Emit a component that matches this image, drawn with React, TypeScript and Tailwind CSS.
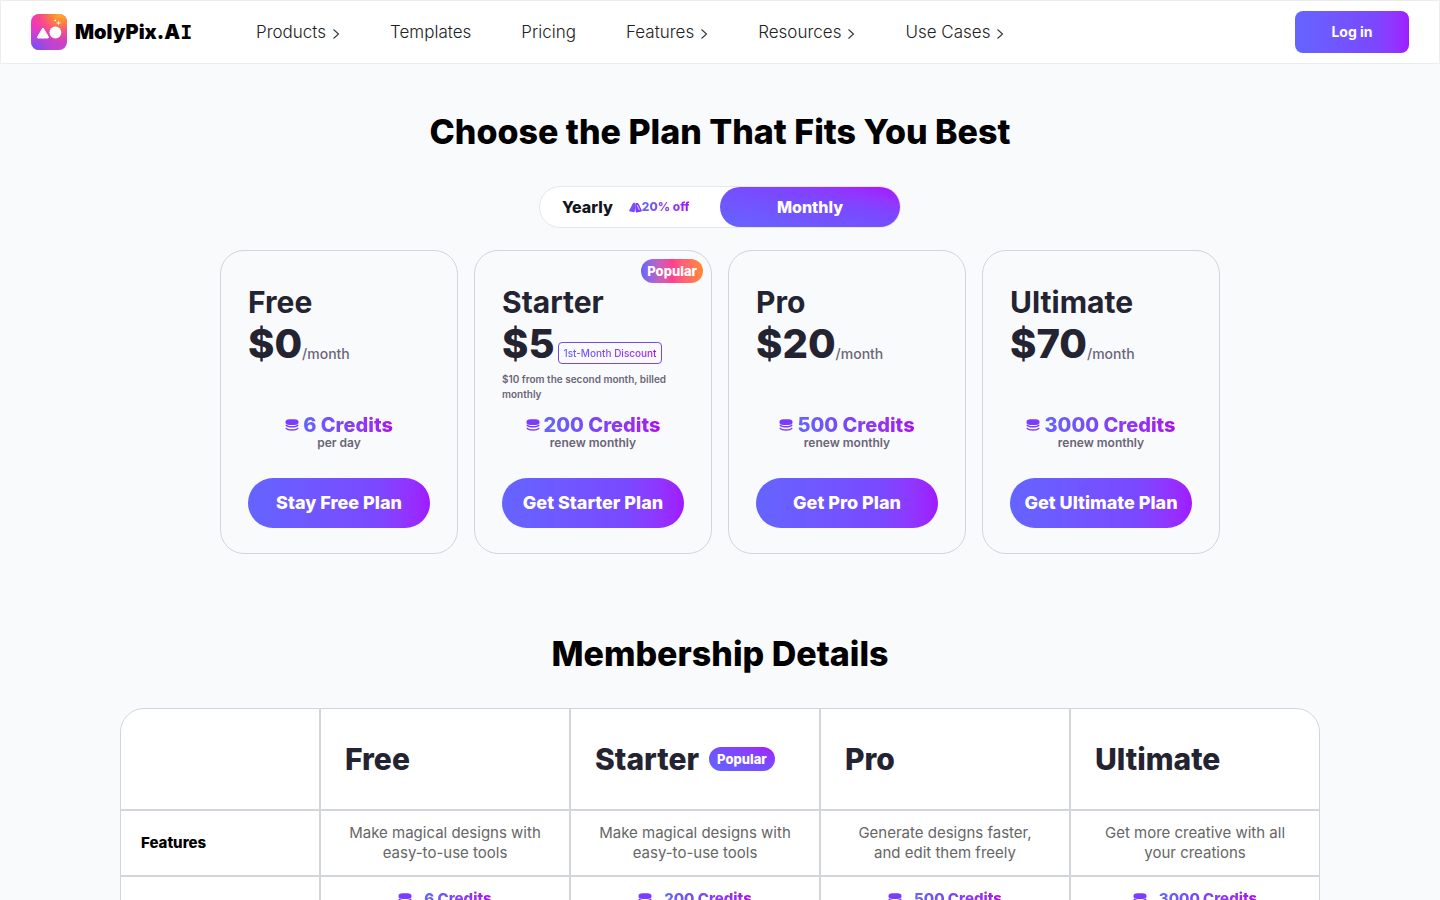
import { useState } from 'react';
import clsx from 'clsx';

type Plan = {
  name: string;
  price: string;
  credits: string;
  renew: string;
  cta: string;
  summary: string;
  discount?: string;
  note?: string;
  popular?: boolean;
};

const plans: Plan[] = [
  {
    name: 'Free',
    price: '$0',
    credits: '6 Credits',
    renew: 'per day',
    cta: 'Stay Free Plan',
    summary: 'Make magical designs with easy-to-use tools',
  },
  {
    name: 'Starter',
    price: '$5',
    credits: '200 Credits',
    renew: 'renew monthly',
    cta: 'Get Starter Plan',
    summary: 'Make magical designs with easy-to-use tools',
    discount: '1st-Month Discount',
    note: '$10 from the second month, billed monthly',
    popular: true,
  },
  {
    name: 'Pro',
    price: '$20',
    credits: '500 Credits',
    renew: 'renew monthly',
    cta: 'Get Pro Plan',
    summary: 'Generate designs faster, and edit them freely',
  },
  {
    name: 'Ultimate',
    price: '$70',
    credits: '3000 Credits',
    renew: 'renew monthly',
    cta: 'Get Ultimate Plan',
    summary: 'Get more creative with all your creations',
  },
];

const navItems = [
  { label: 'Products', menu: true },
  { label: 'Templates', menu: false },
  { label: 'Pricing', menu: false },
  { label: 'Features', menu: true },
  { label: 'Resources', menu: true },
  { label: 'Use Cases', menu: true },
];

const gradientFill = 'bg-linear-to-r from-[#6464ff] via-[#7a48ff] via-70% to-[#a01aff]';
const gradientText =
  'bg-linear-to-r from-[#6464ff] via-[#7a48f5] via-40% to-[#a808f0] bg-clip-text text-transparent';

function LogoMark() {
  return (
    <svg viewBox="0 0 36 36" className="size-9 shrink-0" aria-hidden="true">
      <defs>
        <linearGradient id="logo-base" x1="0" y1="0" x2="0.3" y2="1">
          <stop offset="0" stopColor="#f43ca8" />
          <stop offset="0.45" stopColor="#ee38c8" />
          <stop offset="1" stopColor="#c444cc" />
        </linearGradient>
        <radialGradient id="logo-warm" cx="0.82" cy="0" r="0.85">
          <stop offset="0" stopColor="#ffb41e" />
          <stop offset="0.35" stopColor="#ff7a45" />
          <stop offset="1" stopColor="#f5368f" stopOpacity="0" />
        </radialGradient>
        <radialGradient id="logo-cool" cx="0.1" cy="1" r="0.7">
          <stop offset="0" stopColor="#6a50f8" />
          <stop offset="1" stopColor="#b044e0" stopOpacity="0" />
        </radialGradient>
      </defs>
      <rect width="36" height="36" rx="8" fill="url(#logo-base)" />
      <rect width="36" height="36" rx="8" fill="url(#logo-warm)" />
      <rect width="36" height="36" rx="8" fill="url(#logo-cool)" />
      <path
        d="M12.3 14.2 17.4 23a.7.7 0 0 1-.6 1H7.2a.7.7 0 0 1-.6-1l5.1-8.8a.4.4 0 0 1 .6 0Z"
        fill="#fff"
        stroke="#fff"
        strokeLinejoin="round"
      />
      <circle cx="24.4" cy="18.5" r="5.9" fill="#fff" />
      <path
        d="M27.5 6.2c.3 1.9.8 2.4 2.7 2.7-1.9.3-2.4.8-2.7 2.7-.3-1.9-.8-2.4-2.7-2.7 1.9-.3 2.4-.8 2.7-2.7Z"
        fill="#fff"
      />
      <path
        d="M24.2 5c.15 1 .4 1.2 1.3 1.4-.9.2-1.15.4-1.3 1.4-.15-1-.4-1.2-1.3-1.4.9-.2 1.15-.4 1.3-1.4Z"
        fill="#fff"
      />
    </svg>
  );
}

function CoinsIcon() {
  return (
    <svg viewBox="0 0 14 12" className="h-3 w-3.5 shrink-0" aria-hidden="true">
      <rect x="0.5" y="0.3" width="13" height="5.6" rx="4" ry="2.6" fill="#7c3cff" />
      <g fill="none" stroke="#7c3cff" strokeWidth="1.4" strokeLinecap="round">
        <path d="M1.2 6.3c.8 1 3 1.5 5.800 1.500s5-.5 5.800-1.500" />
        <path d="M1.200 9.300c.8 1.100 3 1.700 5.800 1.700s5-.6 5.800-1.700" />
      </g>
    </svg>
  );
}

function TagsIcon() {
  return (
    <svg viewBox="0 0 13 12" className="h-3 w-[13px] shrink-0" aria-hidden="true">
      <path
        d="M3.400 3.200C4 2.100 5.400 1.600 6.300 2c.5 2.400.3 5.800-.8 9.200L1 10.400c-.5-.1-.9-.4-.8-.9Z"
        fill="#7350ff"
      />
      <path
        d="M6.900 2.100c1-.4 2.400 0 3 1.100l2.900 6.200c.2.400 0 .8-.4 1L7.800 11.400c-.5.1-.9-.1-1-.6C6.300 8 6.200 4.800 6.900 2.100Z"
        fill="#7c3cff"
      />
      <path d="m8.200 4 2.200 5" stroke="#fff" strokeWidth=".8" />
    </svg>
  );
}

function Chevron() {
  return (
    <svg viewBox="0 0 8 12" className="mt-1 h-3 w-2 shrink-0" aria-hidden="true">
      <path d="m1.500 1.500 5 4.500-5 4.500" fill="none" stroke="#333" strokeWidth="1.100" />
    </svg>
  );
}

function Header() {
  return (
    <header className="flex h-16 items-center border border-[#ededed] bg-white px-[30px]">
      <a href="#home" className="flex w-[225px] shrink-0 items-center gap-2 text-black">
        <LogoMark />
        <span className="text-xl leading-6 font-black">
          MolyPix.A<span className="font-['DejaVu_Sans_Mono',monospace]">I</span>
        </span>
      </a>
      <nav className="flex flex-1 items-center gap-[50px] text-[17px] leading-6 font-light text-[#222]">
        {navItems.map(({ label, menu }) =>
          menu ? (
            <button key={label} type="button" className="flex items-center gap-1.5 whitespace-nowrap">
              {label}
              <Chevron />
            </button>
          ) : (
            <a key={label} href={`#${label.toLowerCase()}`}>
              {label}
            </a>
          ),
        )}
      </nav>
      <button
        type="button"
        className={clsx(
          'h-[42px] w-[114px] shrink-0 rounded-lg text-sm font-bold text-white',
          gradientFill,
        )}
      >
        Log in
      </button>
    </header>
  );
}

function PlanCard({ plan }: { plan: Plan }) {
  return (
    <article className="relative flex flex-col rounded-3xl border border-[#d2d5dc] px-[27px] pt-[31px] pb-[25px]">
      {plan.popular && (
        <span className="absolute top-2 right-2 rounded-full bg-linear-to-r from-[#6464ff] via-[#ff3d8f] to-[#ff8a2a] px-1.5 text-[13px] leading-6 font-extrabold text-white">
          Popular
        </span>
      )}
      <h2 className="text-3xl leading-10 font-bold text-[#242331]">{plan.name}</h2>
      <div className="mt-0.5 flex h-10 items-end whitespace-nowrap">
        <span className="text-[40px] leading-10 font-extrabold text-[#242331]">{plan.price}</span>
        {plan.discount ? (
          <span className="ml-1 rounded border border-[#7a48e8] px-1 text-[10px] leading-5 font-medium">
            <span className={gradientText}>{plan.discount}</span>
          </span>
        ) : (
          <span className="text-sm leading-5 font-medium text-[#6b6578]">/month</span>
        )}
      </div>
      <p className="mt-2 h-[43px] text-[10px] leading-[15px] font-semibold text-[#6b6578]">{plan.note}</p>
      <div className="flex items-center justify-center gap-1">
        <CoinsIcon />
        <span className={clsx('text-xl leading-5 font-extrabold', gradientText)}>{plan.credits}</span>
      </div>
      <p className="text-center text-xs leading-4 font-semibold text-[#6b6578]">{plan.renew}</p>
      <button
        type="button"
        className={clsx(
          'mt-[27px] h-[50px] rounded-full text-lg font-extrabold whitespace-nowrap text-white',
          gradientFill,
        )}
      >
        {plan.cta}
      </button>
    </article>
  );
}

function BillingToggle() {
  const [billing, setBilling] = useState<'yearly' | 'monthly'>('monthly');
  const active = 'bg-linear-to-tr from-[#6464ff] via-[#7a48ff] via-60% to-[#a808ff] text-white';

  return (
    <div className="mx-auto mt-8 flex h-[42px] w-[362px] rounded-full border border-[#e5e7eb] bg-white text-base font-extrabold text-[#15151c]">
      <button
        type="button"
        aria-pressed={billing === 'yearly'}
        onClick={() => setBilling('yearly')}
        className={clsx(
          'flex w-1/2 items-center gap-4 rounded-full pl-[22px]',
          billing === 'yearly' && active,
        )}
      >
        Yearly
        <span className="flex items-center">
          <TagsIcon />
          <span className={clsx('text-xs', gradientText)}>20% off</span>
        </span>
      </button>
      <button
        type="button"
        aria-pressed={billing === 'monthly'}
        onClick={() => setBilling('monthly')}
        className={clsx('w-1/2 rounded-full', billing === 'monthly' && active)}
      >
        Monthly
      </button>
    </div>
  );
}

function MembershipTable() {
  const cell = 'border border-[#d2d5d9]';

  return (
    <table className="mx-auto mt-8 w-full max-w-[1200px] table-fixed border-separate border-spacing-0 rounded-3xl bg-white">
      <colgroup>
        <col className="w-1/6" />
        {plans.map((plan) => (
          <col key={plan.name} />
        ))}
      </colgroup>
      <thead>
        <tr className="h-[102px]">
          <td className={clsx(cell, 'rounded-tl-3xl')} />
          {plans.map((plan) => (
            <th key={plan.name} scope="col" className={clsx(cell, 'px-6 last:rounded-tr-3xl')}>
              <div className="flex items-center gap-2.5">
                <span className="text-3xl leading-10 font-extrabold text-[#242331]">{plan.name}</span>
                {plan.popular && (
                  <span className="rounded-full bg-linear-to-tr from-[#6464ff] via-[#7a48ff] via-60% to-[#a808ff] px-2 text-[13px] leading-6 font-extrabold text-white">
                    Popular
                  </span>
                )}
              </div>
            </th>
          ))}
        </tr>
      </thead>
      <tbody>
        <tr className="h-[66px]">
          <th scope="row" className={clsx(cell, 'px-5 text-left text-[15px] font-extrabold text-black')}>
            Features
          </th>
          {plans.map((plan) => (
            <td
              key={plan.name}
              className={clsx(cell, 'px-6 text-center text-[15px] leading-5 text-[#666]')}
            >
              {plan.summary}
            </td>
          ))}
        </tr>
        <tr className="h-[66px]">
          <th
            scope="row"
            className={clsx(cell, 'rounded-bl-3xl px-5 text-left text-[15px] font-extrabold text-black')}
          >
            Credits
          </th>
          {plans.map((plan) => (
            <td key={plan.name} className={clsx(cell, 'text-center last:rounded-br-3xl')}>
              <div className="flex items-center justify-center gap-3">
                <CoinsIcon />
                <span className={clsx('text-[15px] leading-5 font-extrabold', gradientText)}>
                  {plan.credits}
                </span>
              </div>
              <p className="text-xs leading-5 text-[#666]">{plan.renew}</p>
            </td>
          ))}
        </tr>
      </tbody>
    </table>
  );
}

export default function App() {
  return (
    <div className="min-h-screen bg-[#f9fafc] font-['Inter',sans-serif]">
      <Header />
      <main className="pb-16">
        <h1 className="pt-[46px] text-center text-[34px] leading-11 font-extrabold text-black">
          Choose the Plan That Fits You Best
        </h1>
        <BillingToggle />
        <section className="mx-auto mt-[22px] grid max-w-[1000px] grid-cols-4 gap-4">
          {plans.map((plan) => (
            <PlanCard key={plan.name} plan={plan} />
          ))}
        </section>
        <h2 className="mt-[78px] text-center text-[34px] leading-11 font-extrabold text-black">
          Membership Details
        </h2>
        <MembershipTable />
      </main>
    </div>
  );
}
